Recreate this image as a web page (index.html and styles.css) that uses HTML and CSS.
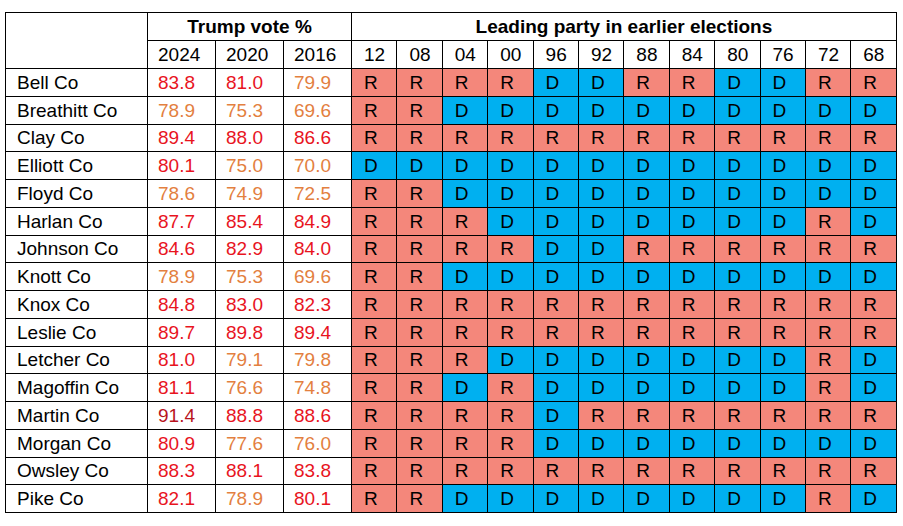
FILE: index.html
```html
<!DOCTYPE html>
<html lang="en">
<head>
<meta charset="utf-8">
<title>Trump vote by county</title>
<link rel="stylesheet" href="styles.css">
</head>
<body>
<table class="grid">
  <colgroup>
    <col class="c-name">
    <col class="c-num"><col class="c-num"><col class="c-num">
    <col class="c-p"><col class="c-p"><col class="c-p"><col class="c-p"><col class="c-p"><col class="c-p">
    <col class="c-p"><col class="c-p"><col class="c-p"><col class="c-p"><col class="c-p"><col class="c-p">
  </colgroup>
  <thead>
    <tr class="hrow">
      <th class="blank" rowspan="2"></th>
      <th class="group" colspan="3">Trump vote %</th>
      <th class="group" colspan="12">Leading party in earlier elections</th>
    </tr>
    <tr class="hrow">
      <th class="yr num">2024</th><th class="yr num">2020</th><th class="yr num">2016</th>
      <th class="yr p">12</th><th class="yr p">08</th><th class="yr p">04</th><th class="yr p">00</th>
      <th class="yr p">96</th><th class="yr p">92</th><th class="yr p">88</th><th class="yr p">84</th>
      <th class="yr p">80</th><th class="yr p">76</th><th class="yr p">72</th><th class="yr p">68</th>
    </tr>
  </thead>
  <tbody id="body"></tbody>
</table>
<script src="app.js"></script>
</body>
</html>
```

FILE: app.js
```js
const rows = [
  ["Bell Co", [83.8, 81.0, 79.9], "RRRRDDRRDDRR"],
  ["Breathitt Co", [78.9, 75.3, 69.6], "RRDDDDDDDDDD"],
  ["Clay Co", [89.4, 88.0, 86.6], "RRRRRRRRRRRR"],
  ["Elliott Co", [80.1, 75.0, 70.0], "DDDDDDDDDDDD"],
  ["Floyd Co", [78.6, 74.9, 72.5], "RRDDDDDDDDDD"],
  ["Harlan Co", [87.7, 85.4, 84.9], "RRRDDDDDDDRD"],
  ["Johnson Co", [84.6, 82.9, 84.0], "RRRRDDRRRRRR"],
  ["Knott Co", [78.9, 75.3, 69.6], "RRDDDDDDDDDD"],
  ["Knox Co", [84.8, 83.0, 82.3], "RRRRRRRRRRRR"],
  ["Leslie Co", [89.7, 89.8, 89.4], "RRRRRRRRRRRR"],
  ["Letcher Co", [81.0, 79.1, 79.8], "RRRDDDDDDDRD"],
  ["Magoffin Co", [81.1, 76.6, 74.8], "RRDRDDDDDDRD"],
  ["Martin Co", [91.4, 88.8, 88.6], "RRRRDRRRRRRR"],
  ["Morgan Co", [80.9, 77.6, 76.0], "RRRRDDDDDDDD"],
  ["Owsley Co", [88.3, 88.1, 83.8], "RRRRRRRRRRRR"],
  ["Pike Co", [82.1, 78.9, 80.1], "RRDDDDDDDDRD"]
];
const body = document.getElementById("body");
rows.forEach(([name, nums, parties]) => {
  const tr = document.createElement("tr");
  tr.className = "drow";
  const n = document.createElement("td");
  n.className = "name";
  n.textContent = name;
  tr.appendChild(n);
  nums.forEach(v => {
    const td = document.createElement("td");
    td.className = "num " + (v >= 90 ? "hi" : v >= 80 ? "mid" : "lo");
    td.textContent = v.toFixed(1);
    tr.appendChild(td);
  });
  [...parties].forEach(p => {
    const td = document.createElement("td");
    td.className = "p " + (p === "R" ? "rep" : "dem");
    td.textContent = p;
    tr.appendChild(td);
  });
  body.appendChild(tr);
});
```

FILE: styles.css
```css
html, body {
  margin: 0;
  padding: 0;
  background: #ffffff;
}
body {
  padding: 12px 0 0 5px;
  font-family: "Liberation Sans", Arial, sans-serif;
  font-size: 19px;
  color: #000;
}
.grid {
  border-collapse: collapse;
  table-layout: fixed;
  width: 891px;
}
.c-name { width: 142px; }
.c-num { width: 68px; }
.c-p { width: 45.4px; }
.grid th, .grid td {
  border: 1px solid #000;
  padding: 0;
  white-space: nowrap;
  overflow: hidden;
  line-height: 1;
  vertical-align: middle;
}
.hrow { height: 28px; }
.drow { height: 27.75px; }
.grid .group {
  font-weight: bold;
  text-align: center;
}
.grid .yr {
  font-weight: normal;
  text-align: left;
}
.grid .num { padding-left: 10px; }
.grid .p { padding-left: 12px; }
.grid .name { padding-left: 11px; }
.hi { color: #b8141e; }
.mid { color: #e8141e; }
.lo { color: #e3803f; }
.rep { background: #f4877b; }
.dem { background: #00b0f0; }
```
